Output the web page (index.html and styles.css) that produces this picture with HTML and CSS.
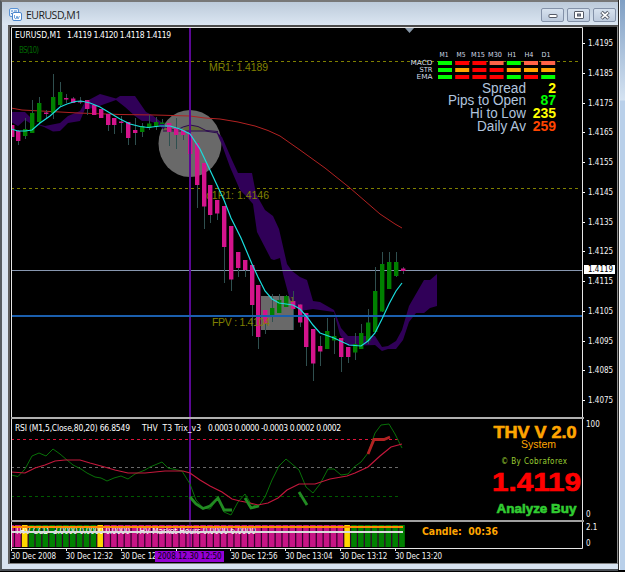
FILE: index.html
```html
<!DOCTYPE html>
<html lang="en">
<head>
  <meta charset="UTF-8">
  <title>EURUSD,M1</title>
  <link rel="stylesheet" href="styles.css">
</head>
<body>

  <div class="window">
    <div class="titlebar">
      <svg class="app-icon" width="13" height="13" viewBox="0 0 13 13">
        <rect x="0.5" y="0.5" width="9" height="8" rx="1.5" fill="#eaf3fc" stroke="#5a93d6"/>
        <path d="M2 3h2M5 3h3M2 5.5h2" stroke="#4b86cc"/>
        <rect x="3.5" y="4.5" width="9" height="8" rx="1.5" fill="#fff" stroke="#4b86cc"/>
        <path d="M5.5 7v3l1.5 1 1-3 1 3 1.5-3" stroke="#6fa3dc"/>
      </svg>
      <span class="title">EURUSD,M1</span>
      <div class="buttons">
        <button type="button"><svg width="10" height="10" viewBox="0 0 10 10"><rect x="1" y="4.5" width="8" height="3" rx="0.5" fill="#fff" stroke="#555b68"/></svg></button>
        <button type="button"><svg width="10" height="10" viewBox="0 0 10 10"><rect x="0.5" y="1.5" width="9" height="7" rx="0.5" fill="#fff" stroke="#555b68"/><rect x="3.5" y="4" width="3" height="2" fill="#8b93a3" stroke="#555b68"/></svg></button>
        <button type="button"><svg width="12" height="10" viewBox="0 0 12 10"><path d="M2.5 2l7 6.500M9.500 2l-7 6.500" stroke="#555b68" stroke-width="3.600"/><path d="M2.800 2.300l6.400 5.900M9.200 2.300l-6.400 5.900" stroke="#fff" stroke-width="1.600"/></svg></button>
      </div>
    </div>

    <div class="client">
      <!-- price chart -->
      <div class="pane price">
        <svg class="plot" width="572" height="390" viewBox="11 27 572 390">
          <path class="dash olive" d="M11 61.500H580"/>
          <path class="dash olive" d="M11 188.500H580"/>
          <ellipse cx="190" cy="143.500" rx="31.500" ry="33.500" fill="#696969"/>
          <rect x="261" y="296" width="32" height="34" fill="#696969"/>
          <g class="cloud">
            <path d="M11 112H25L33 120V125L25 120 18 126 11 122Z"/>
            <path d="M33 123L45 126 60 123 68 116 80 111 85 102 100 94 116 98.500 120 96H135L146 112 152 115 165 125V131L158 124 149 121 142 121 135 116 125 107 116 100 102 105 94 108 85 109 80 121 68 123 60 131 53 131.500 44 127Z"/>
            <path d="M216 131L222 137 232 160 238 173H252L256 194 265 210 273 216 279 229 287 264 292 271 300 277 307 280 313 301 320 302 327 306 334 310 341 328 348 336H375L382 347 388 346 396 341 402 330 409 306 424 280H430L437 274V306L430 308 424 313H416L409 322 403 340 396 349H388L382 351 375 345 348 346 340 335 334 312 313 309 300 311 290 300 283 274 280 258 274 260 271 259 257 232 253 204 246 196 240 190 230 167 222 145Z"/>
          </g>
          <path d="M163 131L165 127 169 127.500 176 131ZM183 130L185 126 191 125 200 127 206 131Z" fill="#616b3c"/>
          <path d="M162 126L176 130.500 183 127 190 125 198 126.500 206 130.500 218 131.500M163 131H190L205 131 218 133" stroke="#2c0a50"/>
          <path class="price-line" d="M11 270.500H582"/>
          <text class="note" x="209" y="71" textLength="59">MR1: 1.4189</text>
          <text class="note" x="206" y="199" textLength="63">q1R1: 1.4146</text>
          <path class="ma" d="M11 108L22 110 60 112 78 113 120 114.500 155 115 190 116 205 118 220 119 238 122 255 126 268 130.500 280 136 300 150 325 168 350 188 380 214 395 224 402 228"/>
          <g id="candles"></g>
          <path class="session" d="M190 27V417"/>
          <path class="pivot" d="M11 316H582"/>
          <text class="note" x="212" y="326" textLength="58">FPV : 1.4104</text>
          <text x="290" y="302" class="note small">1</text>
          <path class="fast" d="M11 129L18 131 25 131 32 130 40 123 50 116 60 107 67 104 75 101.500 81 101 90 103 100 107 110 113 120 119 130 124 140 126.500 148 127.500 160 126 170 126 180 129 190 134 200 149 209 168 224 200 231 218 241 238 252 264 258 277 265 291 272 299 279 303 286 304 293 305 300 309 307 317 313 325 320 333 334 338 349 345 361 346 368 341 375 333 382 319 389 304 396 291 402 283"/>
          <path d="M405 28H414L409.500 33Z" fill="#8898a8"/>

          <text class="head" x="15" y="38" textLength="46">EURUSD,M1</text>
          <text class="head" x="67" y="38" textLength="104">1.4119 1.4120 1.4118 1.4119</text>
          <text class="bs" x="19" y="53" textLength="20">BS(10)</text>

          <g id="signals"></g>

          <g class="stat-name">
            <text x="526" y="92.500" textLength="44" lengthAdjust="spacingAndGlyphs">Spread</text>
            <text x="526" y="105" textLength="78" lengthAdjust="spacingAndGlyphs">Pips to Open</text>
            <text x="526" y="118" textLength="56" lengthAdjust="spacingAndGlyphs">Hi to Low</text>
            <text x="526" y="131" textLength="49" lengthAdjust="spacingAndGlyphs">Daily Av</text>
          </g>
          <g class="stat-value">
            <text x="556" y="92.500" fill="#ffff00">2</text>
            <text x="556" y="105" fill="#00ff00">87</text>
            <text x="556" y="118" fill="#ffff00">235</text>
            <text x="556" y="131" fill="#ff4500">259</text>
          </g>
          <path class="frame" d="M11.500 417V27.500H582.500V417"/>
        </svg>
        <div class="axis">
          <span>1.4195</span>
          <span>1.4185</span>
          <span>1.4175</span>
          <span>1.4165</span>
          <span>1.4155</span>
          <span>1.4145</span>
          <span>1.4135</span>
          <span>1.4125</span>
          <span>1.4115</span>
          <span>1.4105</span>
          <span>1.4095</span>
          <span>1.4085</span>
          <span>1.4075</span>
          <b class="tag">1.4119</b>
        </div>
      </div>

      <!-- RSI / Trix -->
      <div class="pane rsi">
        <svg class="plot" width="572" height="101" viewBox="11 419 572 101">
          <path class="dash" stroke="#dc143c" d="M11 439.500H400"/>
          <path class="dash" stroke="#696969" d="M11 467.500H400"/>
          <path class="dash" stroke="#005a00" d="M11 496.500H400"/>
          <path class="session" d="M190 418V520"/>
          <path class="rsi-line" d="M11 475L18 476.500 25 469 32 456 39 453 46 456 53 449 60 454 67 460 73 465 81 469 87 473 95 477 101 478 107 481 114 478 121 476 128 479 135 474 145 470 150 467 162 462 168 468 182 471 190 484 196 500 203 508 210 509 218 498 224 512 231 515 238 502 245 494 251 504 258 507 265 497 272 480 279 466 286 459 292 464 299 470 306 487 313 493 320 484 328 469H334L341 475 348 474 354 467 361 462 368 453 375 433 381 425 389 424 395 434 402 448"/>
          <path class="trix-line" d="M11 472L25 473 35 468 45 465 55 461 65 460H80L90 463 101 466 115 470 128 473H145L165 471H183L190 473 200 480 210 486 222 492 232 499 240 501 250 503 258 505 268 503 278 498 287 490 299 484H315L330 479 347 476 355 473 368 467 380 456 391 447 402 444"/>
          <path class="thick" stroke="#228b22" d="M190 497L196 504 203 508.500 210 506 218 498 224 510H232M245 498L251 508 259 506M299 492L307 505"/>
          <path class="thick" stroke="#b22222" d="M368 454L374 439.500H384L390 437"/>
          <text class="head" x="15" y="430.500" textLength="115">RSI (M1,5,Close,80,20) 66.8549</text>
          <text class="head" x="142" y="430.500" textLength="59" xml:space="preserve">THV  T3 Trix_v3</text>
          <text class="head" x="208" y="430.500" textLength="133">0.0003 0.0000 -0.0003 0.0002 0.0002</text>
          <text class="black" x="493.500" y="437.500" textLength="83" lengthAdjust="spacingAndGlyphs" font-size="16" fill="#ffa500" stroke="#ffa500">THV V 2.0</text>
          <text class="system" x="521" y="448" textLength="35" lengthAdjust="spacingAndGlyphs">System</text>
          <text class="by" x="501" y="463.500" textLength="66">© By Cobraforex</text>
          <text class="black" x="492" y="490.500" textLength="89" lengthAdjust="spacingAndGlyphs" font-size="25" fill="#ff0000" stroke="#ff0000">1.4119</text>
          <text class="black" x="496.500" y="513" textLength="80" lengthAdjust="spacingAndGlyphs" font-size="13" fill="#32cd32" stroke="#32cd32">Analyze Buy</text>
          <path class="frame" d="M11.500 418V520M582.500 418V520"/>
        </svg>
        <div class="axis ends"><span>100</span><span>0</span></div>
      </div>

      <!-- market hours strip -->
      <div class="pane hours">
        <svg class="plot" width="572" height="27" viewBox="11 522 572 27">
          <rect x="11" y="525" width="393" height="22" fill="#32002c"/>
          <g id="bars"></g>
          <path class="session faint" d="M190 522V547"/>
          <text class="head" x="15" y="534" textLength="34">THV CCD</text>
          <text class="head" x="53" y="534" textLength="77">3.0000 0.0000 0.0000</text>
          <text class="head" x="135" y="534" textLength="121">THV Market Hours 0.0000 6.0000</text>
          <path d="M11 527H403" stroke="#ff8c00" stroke-width="2"/>
          <path d="M11 532H403" stroke="#dcdcdc" stroke-width="2"/>
          <text class="candle-time" x="422" y="535" textLength="76" lengthAdjust="spacingAndGlyphs" xml:space="preserve">Candle:  00:36</text>
          <path class="frame" d="M11.500 522V548.500H582.500V522"/>
        </svg>
        <div class="axis ends"><span>2.1</span><span>0</span></div>
      </div>

      <div class="times">
        <span>30 Dec 2008</span>
        <span>30 Dec 12:32</span>
        <span>30 Dec 12</span>
        <span></span>
        <span>30 Dec 12:56</span>
        <span>30 Dec 13:04</span>
        <span>30 Dec 13:12</span>
        <span>30 Dec 13:20</span>
        <b class="cursor-time">2008.12.30 12:50</b>
      </div>
    </div>
  </div>

  <div class="desktop"></div>

  <script src="script.js"></script>
</body>
</html>
```
FILE: styles.css
```css
body {
  margin: 0;
  display: flex;
  width: 625px;
  height: 572px;
  overflow: hidden;
  background: #000;
  font-family: "DejaVu Sans Condensed", "Open Sans", sans-serif;
}

.window {
  box-sizing: border-box;
  width: 618px;
  height: 571px;
  padding: 0 0 0 6px;
  border-top: 2px solid #777;
  border-left: 2px solid #555b60;
  border-bottom: 2px solid #4a4f55;
  background: #d8e3f0;
}

.titlebar {
  display: flex;
  align-items: center;
  height: 23px;
  margin-left: -6px;
  padding: 2px 0 0 7px;
  box-sizing: border-box;
  background: linear-gradient(#bccada, #dbe6f2);
}

.title {
  flex: 1;
  margin-left: 4px;
  font: 10.5px "Open Sans", sans-serif;
  letter-spacing: -0.5px;
  color: #222;
}

.buttons {
  display: flex;
  gap: 3px;
  margin-right: 2px;
}

.buttons button {
  box-sizing: border-box;
  display: flex;
  align-items: center;
  justify-content: center;
  width: 23px;
  height: 14px;
  padding: 0;
  border: 1px solid #8391a8;
  border-radius: 2px;
  background: linear-gradient(#d7e2ef, #bccadd);
}

.client {
  box-sizing: border-box;
  width: 610px;
  height: 539px;
  border-top: 2px solid #4b4b4b;
  border-left: 2px solid #5c5c5c;
  border-right: 1px solid #8c8c8c;
  border-bottom: 1px solid #808080;
  background: #000;
  padding-left: 1px;
}

.pane {
  display: flex;
}

.plot {
  display: block;
  flex: none;
}

.price {
  height: 390px;
}

.rsi {
  height: 101px;
  margin-right: 33px;
  border-top: 2px solid #b0b0b0;
  border-bottom: 2px solid #a0a0a0;
}

.hours {
  height: 27px;
}

.axis {
  position: relative;
  display: flex;
  flex-direction: column;
  padding-top: 2px;
  font-size: 8px;
  color: #f4f4f4;
}

.price .axis span {
  height: 29.77px;
  line-height: 30px;
}

.price .axis span::before {
  content: "";
  display: inline-block;
  width: 2px;
  height: 1px;
  margin-right: 3px;
  vertical-align: 2px;
  background: #fff;
}

.tag {
  position: absolute;
  top: 238px;
  left: 1px;
  width: 31px;
  height: 9px;
  background: #fff;
  color: #000;
  font-weight: normal;
  line-height: 9px;
  text-indent: 4px;
}

.ends {
  justify-content: space-between;
  padding: 1px 0 0 3px;
  line-height: 10px;
}

.times {
  position: relative;
  display: flex;
  height: 14px;
  font-size: 8px;
  line-height: 15px;
  color: #f4f4f4;
}

.times span {
  flex: none;
  width: 54.85px;
  white-space: nowrap;
  letter-spacing: -0.1px;
  background: linear-gradient(#fff, #fff) 0 0 / 1px 2px no-repeat;
}

.cursor-time {
  position: absolute;
  top: 2px;
  left: 144px;
  width: 69px;
  height: 11px;
  background: #9400d3;
  color: #000;
  font-weight: normal;
  line-height: 11px;
  text-align: center;
  white-space: nowrap;
}

.desktop {
  flex: 1;
  height: 570px;
  border-left: 1px solid #222;
  box-shadow: inset 1px 0 #fff;
  background: linear-gradient(#7f9fc4, #d5e3f2 100px, #b9d0ea 101px, #b9d0ea);
}

/* chart drawing */
path:not([fill]) {
  fill: none;
}

.cloud path:not([fill]) {
  fill: #300058;
}

.frame {
  stroke: #e6e6e6;
}

.dash {
  stroke-dasharray: 3 3;
}

.olive {
  stroke: #808000;
}

.price-line {
  stroke: #8797b0;
}

.pivot {
  stroke: #1b5fae;
  stroke-width: 2;
}

.session {
  stroke: #5a0894;
  stroke-width: 2;
}

.faint {
  opacity: 0.5;
}

.ma {
  stroke: #b22222;
}

.fast {
  stroke: #19dede;
  stroke-width: 1.2;
}

.rsi-line {
  stroke: #087008;
}

.trix-line {
  stroke: #c4183c;
  stroke-width: 1.2;
}

.thick {
  stroke-width: 2.8;
}

.head {
  font-size: 8.5px;
  fill: #fff;
}

.bs {
  font-size: 8px;
  fill: #006400;
}

.note {
  font: 10.5px "Liberation Sans", sans-serif;
  fill: #808000;
}

.small {
  font-size: 8px;
}

.stat-name {
  font: 14px "Liberation Sans", sans-serif;
  fill: #b0c4de;
  text-anchor: end;
}

.stat-value {
  font: bold 14px "Liberation Sans", sans-serif;
  text-anchor: end;
}

.signal {
  font: 7px "DejaVu Sans Condensed", sans-serif;
  fill: #d3dbe6;
}

.black {
  font-family: "Liberation Sans", sans-serif;
  font-weight: bold;
  stroke-width: 0.6;
}

.system {
  font: 11px "Liberation Sans", sans-serif;
  fill: #ffa500;
}

.by {
  font-size: 8px;
  fill: #9acd32;
}

.candle-time {
  font-size: 11px;
  font-weight: bold;
  fill: #ffa500;
}
```
FILE: script.js
```js
const NS = "http://www.w3.org/2000/svg";
const STEP = 6.86;
const PINK = "#d4148c";
const GREEN = "#008000";

function rect(parent, x, y, width, height, fill) {
  const el = document.createElementNS(NS, "rect");
  const attrs = { x, y, width, height, fill };
  for (const key in attrs) el.setAttribute(key, attrs[key]);
  parent.appendChild(el);
}

function label(parent, x, y, text, width, anchor) {
  const el = document.createElementNS(NS, "text");
  el.setAttribute("class", "signal");
  el.setAttribute("x", x);
  el.setAttribute("y", y);
  el.setAttribute("textLength", width);
  el.setAttribute("lengthAdjust", "spacingAndGlyphs");
  el.setAttribute("text-anchor", anchor);
  el.textContent = text;
  parent.appendChild(el);
}

// [direction, high, body top, body bottom, low]
const candles = [
  ["d", 125, 125, 137, 137], ["d", 130, 131, 141, 145], ["u", 118, 129, 136, 139],
  ["u", 100, 113, 133, 133], ["u", 97, 103, 122, 124], ["d", 110, 112.5, 114, 118],
  ["u", 74, 97, 113, 119], ["u", 82, 92, 105, 106], ["d", 94, 98, 99.5, 103],
  ["d", 97, 98.5, 103, 103], ["d", 97, 101, 102.5, 104], ["d", 100, 100, 109, 115],
  ["d", 105, 105, 115, 115], ["d", 109, 109, 118, 118], ["d", 114, 114, 125, 131],
  ["d", 118, 118, 125, 134], ["d", 116, 121.5, 123, 133], ["d", 122, 122, 138, 145],
  ["d", 118, 130, 133, 145], ["u", 123, 126, 132, 137], ["u", 115, 123.5, 128, 130],
  ["u", 117, 122, 127, 130], ["u", 119, 122.5, 124, 124], ["d", 123, 123, 132, 146],
  ["d", 118, 128, 135, 149], ["d", 130, 130, 135, 140], ["d", 134, 134, 154, 154],
  ["d", 143, 143, 185, 208], ["d", 163, 163, 206.5, 229], ["d", 185, 185, 215, 223],
  ["d", 200, 200, 213.5, 220], ["d", 206, 206, 247, 283], ["d", 226, 226, 279.5, 291],
  ["d", 252, 252, 268, 277], ["d", 260, 260, 270, 277], ["d", 265, 265, 305, 336],
  ["d", 285, 285, 337, 349], ["d", 310, 310, 324, 334], ["u", 294, 308, 317, 322],
  ["u", 294, 300, 313, 313], ["u", 295, 296, 307, 307], ["d", 291, 301, 309, 330],
  ["d", 304, 304.5, 322.5, 327], ["d", 313, 313, 347, 366], ["d", 329, 329, 363.5, 381],
  ["d", 336, 346, 351.5, 366], ["u", 318, 331, 349, 349], ["u", 318, 336, 340.5, 354],
  ["d", 338, 338, 357, 372], ["d", 347, 347, 357, 363], ["u", 333, 344, 352.5, 360],
  ["u", 324, 333, 349, 349], ["u", 309, 322.5, 341, 344], ["u", 267, 291, 332, 332],
  ["u", 252, 264, 311.5, 312], ["u", 252, 262, 289, 289], ["u", 252, 262, 276, 277],
  ["d", 267, 268.5, 271, 274]
];

const chart = document.getElementById("candles");
candles.forEach(([dir, high, top, bottom, low], i) => {
  const x = Math.round(11.5 + i * STEP);
  const left = Math.max(x - 2, 11);
  rect(chart, x, high, 1, low - high, "#2f4f4f");
  rect(chart, left, top, x + 2.4 - left, bottom - top, dir === "u" ? GREEN : PINK);
});

// market hours strip, one bar per candle
const bars = document.getElementById("bars");
for (let i = 0; i < candles.length; i++) {
  let color = "#c71585";
  if (i === 2 || i === 13 || i === 49) color = "#ffd700";
  else if ((i > 2 && i < 13) || i > 49) color = "#008000";
  const x = 8.2 + i * STEP;
  const left = Math.max(x, 12);
  rect(bars, left, 525, x + 5.6 - left, 22, color);
}

// trend per timeframe: lime, red, orange, tomato
const colors = { g: "#00ff00", r: "#ff0000", o: "#ffa500", t: "#ff6347" };
const frames = ["M1", "M5", "M15", "M30", "H1", "H4", "D1"];
const rows = [["MACD", "grrtgtt", 22], ["STR", "gorrooo", 13], ["EMA", "grrrgrg", 16]];
const signals = document.getElementById("signals");

frames.forEach((name, i) => {
  label(signals, 444 + i * 17, 56.5, name, name.length > 2 ? 14 : 9, "middle");
});
rows.forEach(([name, trend, width], r) => {
  label(signals, 432.5, 65 + r * 7, name, width, "end");
  trend.split("").forEach((t, i) => {
    rect(signals, 438 + i * 17.2, 61 + r * 7, 14, 4, colors[t]);
  });
});
```
